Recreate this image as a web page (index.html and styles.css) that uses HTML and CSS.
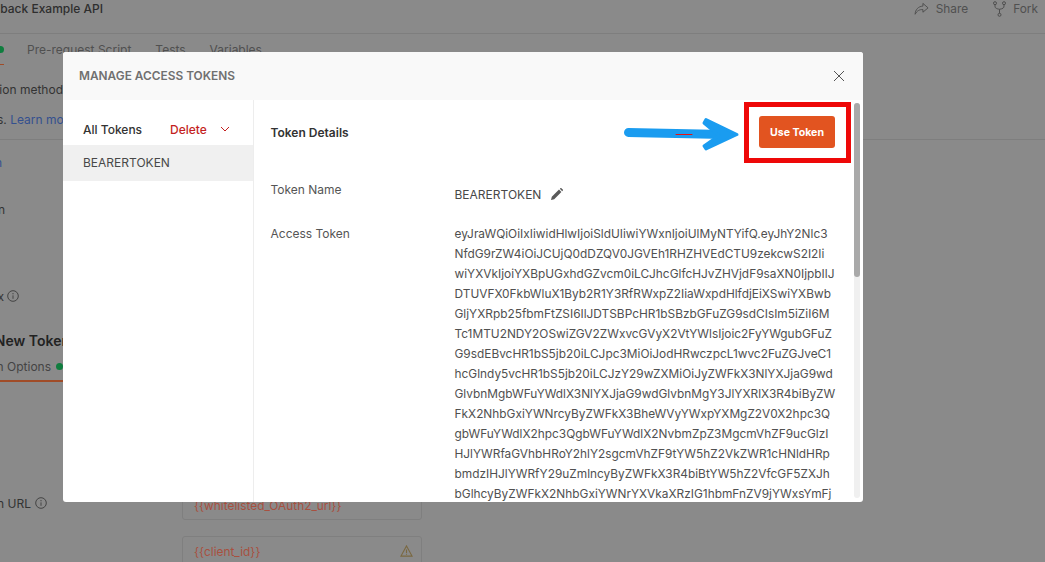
FILE: index.html
```html
<!DOCTYPE html>
<html lang="en">
<head>
<meta charset="utf-8">
<title>Manage Access Tokens</title>
<link rel="stylesheet" href="styles.css">
</head>
<body>
<div class="app">
  <header class="topbar">
    <div class="clip title-clip"><span class="title">Callback Example API</span></div>
    <div class="actions">
      <span class="action">
        <svg class="ico-share" viewBox="0 0 16 14"><path d="M9.500 1 15 5.800 9.500 10.400V7.600C6 7.400 3.200 8.800 1.200 12.600 1.400 7.600 4.600 4.200 9.500 3.900Z"/></svg>
        Share
      </span>
      <span class="action">
        <svg class="ico-fork" viewBox="0 0 13 16"><circle cx="2" cy="2.200" r="1.500"/><circle cx="11" cy="2.200" r="1.500"/><circle cx="6.500" cy="13.800" r="1.500"/><path d="M2 3.700V5c0 2 1 2.600 4.500 3.300 3.500-.7 4.500-1.300 4.500-3.300V3.700M6.500 8.300v4"/></svg>
        Fork
      </span>
    </div>
  </header>
  <nav class="tabs">
    <div class="clip tab-first"><span>Authorization</span><i class="dot"></i></div>
    <span class="tab">Pre-request Script</span>
    <span class="tab">Tests</span>
    <span class="tab">Variables</span>
  </nav>
  <div class="clip line-a"><span>Select an authorization method</span></div>
  <div class="clip line-b"><span>variables. <a class="learn">Learn more</a></span></div>
  <div class="rule"></div>
  <div class="clip line-c"><span class="blue">Authorization</span></div>
  <div class="clip line-d"><span>Token</span></div>
  <div class="clip line-e"><span>Header Prefix</span><svg class="info" viewBox="0 0 12 12"><circle cx="6" cy="6" r="5.300"/><path d="M6 5.400v3.400M6 3v1.300"/></svg></div>
  <div class="clip line-f"><span>Configure New Token</span></div>
  <div class="clip line-g"><span>Configuration Options</span><i class="dot"></i></div>
  <div class="clip-rule"></div>
  <div class="form-row">
    <div class="clip line-h"><span>Access Token URL</span><svg class="info" viewBox="0 0 12 12"><circle cx="6" cy="6" r="5.300"/><path d="M6 5.400v3.400M6 3v1.300"/></svg></div>
    <div class="inputs">
      <div class="input">{{whitelisted_OAuth2_url}}</div>
      <div class="input">{{client_id}}
        <svg class="warn" viewBox="0 0 14 13"><path d="M7 1 13 12H1Z"/><path d="M7 5v3.600M7 9.600v1"/></svg>
      </div>
    </div>
  </div>
</div>

<section class="modal">
  <div class="modal-head">
    <h2 class="modal-title">MANAGE ACCESS TOKENS</h2>
    <svg class="close" viewBox="0 0 12 12"><path d="M1 1l10 10M11 1 1 11"/></svg>
  </div>
  <div class="modal-body">
    <aside class="side">
      <div class="side-head">
        <span class="all">All Tokens</span>
        <span class="delete">Delete</span>
        <svg class="chev" viewBox="0 0 10 6"><path d="M1 1l4 4 4-4"/></svg>
      </div>
      <div class="side-item">BEARERTOKEN</div>
    </aside>
    <div class="detail">
      <div class="detail-head">
        <span class="detail-title">Token Details</span>
        <svg class="arrow" viewBox="0 0 116 36">
          <path class="arrow-shaft" d="M4.500 17.500 100 19.500"/>
          <path class="arrow-head" d="M82 4.500 113 19.500 82 34 80 31 95 20.500 80 8Z"/>
          <path class="arrow-mark" d="M52 19.500H68"/>
        </svg>
        <div class="redbox"><button class="use">Use Token</button></div>
      </div>
      <div class="row row-name">
        <span class="label">Token Name</span>
        <span class="value name">BEARERTOKEN
          <svg class="pencil" viewBox="0 0 12 12"><path d="M0 12l.8-3.200L8 1.600 10.400 4 3.200 11.200ZM8.800.8l.6-.6c.3-.3.7-.3 1 0l1.400 1.400c.3.3.3.7 0 1l-.6.6Z"/></svg>
        </span>
      </div>
      <div class="row">
        <span class="label">Access Token</span>
        <div class="token">
          <div>eyJraWQiOiIxIiwidHlwIjoiSldUIiwiYWxnIjoiUlMyNTYifQ.eyJhY2Nlc3</div>
          <div>NfdG9rZW4iOiJCUjQ0dDZQV0JGVEh1RHZHVEdCTU9zekcwS2I2Ii</div>
          <div>wiYXVkIjoiYXBpUGxhdGZvcm0iLCJhcGlfcHJvZHVjdF9saXN0IjpbIlJ</div>
          <div>DTUVFX0FkbWluX1Byb2R1Y3RfRWxpZ2IiaWxpdHlfdjEiXSwiYXBwb</div>
          <div>GljYXRpb25fbmFtZSI6IlJDTSBPcHR1bSBzbGFuZG9sdCIsIm5iZiI6M</div>
          <div>Tc1MTU2NDY2OSwiZGV2ZWxvcGVyX2VtYWlsIjoic2FyYWgubGFuZ</div>
          <div>G9sdEBvcHR1bS5jb20iLCJpc3MiOiJodHRwczpcL1wvc2FuZGJveC1</div>
          <div>hcGlndy5vcHR1bS5jb20iLCJzY29wZXMiOiJyZWFkX3NlYXJjaG9wd</div>
          <div>GlvbnMgbWFuYWdlX3NlYXJjaG9wdGlvbnMgY3JlYXRlX3R4biByZW</div>
          <div>FkX2NhbGxiYWNrcyByZWFkX3BheWVyYWxpYXMgZ2V0X2hpc3Q</div>
          <div>gbWFuYWdlX2hpc3QgbWFuYWdlX2NvbmZpZ3MgcmVhZF9ucGlzI</div>
          <div>HJlYWRfaGVhbHRoY2hlY2sgcmVhZF9tYW5hZ2VkZWR1cHNldHRp</div>
          <div>bmdzIHJlYWRfY29uZmlncyByZWFkX3R4biBtYW5hZ2VfcGF5ZXJh</div>
          <div>bGlhcyByZWFkX2NhbGxiYWNrYXVkaXRzIG1hbmFnZV9jYWxsYmFj</div>
        </div>
      </div>
      <div class="scroll"><div class="thumb"></div></div>
    </div>
  </div>
</section>
</body>
</html>
```
FILE: styles.css
```css
* { box-sizing: border-box; }
html, body { margin: 0; height: 562px; overflow: hidden; }
body {
  position: relative;
  background: #8a8a8a;
  font-family: Inter, "Liberation Sans", sans-serif;
  font-size: 12px;
  color: #3a3a3a;
}
.app { height: 562px; overflow: hidden; }
.clip { display: flex; justify-content: flex-end; align-items: center; white-space: nowrap; }

.topbar { height: 34px; display: flex; justify-content: space-between; border-bottom: 1px solid #7e7e7e; }
.title-clip { width: 103px; height: 17px; }
.title { font-weight: 500; color: #2e2e2e; }
.actions { display: flex; gap: 25px; padding: 0 7px 0 0; height: 17px; }
.action { display: flex; align-items: center; gap: 7px; color: #505050; font-size: 11.88px; }
.ico-share { width: 15px; height: 14px; fill: none; stroke: #4e4e4e; stroke-width: 1; }
.ico-fork { width: 13px; height: 16px; fill: none; stroke: #4e4e4e; stroke-width: 1; }

.tabs { height: 30px; display: flex; align-items: center; color: #505050; }
.tab-first { width: 4px; gap: 5px; align-self: stretch; box-shadow: 0 1px 0 #a04c28; }
.tab-first span { color: #2e2e2e; }
.tab { margin-left: 24px; }
.tab:nth-child(2) { margin-left: 23px; }
.dot { display: inline-block; width: 7px; height: 7px; border-radius: 50%; background: #0f7d3e; flex: none; }

.line-a { width: 63px; height: 20px; margin-top: 15px; color: #333; }
.line-b { width: 75px; height: 20px; margin-top: 10px; color: #333; }
.learn { color: #34508f; }
.rule { height: 1px; background: #7e7e7e; margin-top: 10px; }
.line-c { width: 2px; height: 20px; margin-top: 12px; }
.blue { color: #34508f; }
.line-d { width: 5px; height: 20px; margin-top: 27px; color: #333; }
.line-e { width: 19px; height: 20px; margin-top: 67px; gap: 3px; color: #333; }
.info { width: 12px; height: 12px; flex: none; fill: none; stroke: #444; stroke-width: 1; }
.line-f { width: 70px; height: 20px; margin-top: 24px; font-size: 14px; font-weight: 600; color: #222; }
.line-g { width: 63px; height: 20px; margin-top: 6px; gap: 5px; color: #444; }
.clip-rule { width: 63px; height: 2px; background: #a04c28; margin-top: 4px; }
.form-row { display: flex; margin-top: 110px; align-items: flex-start; }
.line-h { width: 47px; height: 20px; margin-top: 1px; gap: 4px; color: #333; flex: none; }
.inputs { margin-left: 135px; margin-top: -2px; display: flex; flex-direction: column; gap: 16px; }
.input {
  width: 240px; height: 30px; padding: 0 8px 0 11px;
  display: flex; align-items: center; justify-content: space-between;
  border: 1px solid #7f7f7f; border-radius: 3px;
  color: #a8503f; font-size: 11.88px;
}
.warn { width: 13px; height: 12px; fill: none; stroke: #7a6840; stroke-width: 1.2; }

.modal {
  position: absolute; left: 63px; top: 52px; width: 800px; height: 450px;
  background: #fff; border-radius: 3px; overflow: hidden;
  display: flex; flex-direction: column;
}
.modal-head { height: 48px; flex: none; background: #f9f9f9; display: flex; align-items: center; justify-content: space-between; padding: 0 18px 0 16px; }
.modal-title { margin: 0 0 1px; font-size: 11.88px; font-weight: 600; color: #707070; }
.close { width: 12px; height: 12px; fill: none; stroke: #555; stroke-width: 1; }
.modal-body { flex: 1; display: flex; min-height: 0; }

.side { width: 191px; flex: none; border-right: 1px solid #ededed; }
.side-head { height: 45px; padding: 13px 0 0 20px; display: flex; align-items: center; }
.all { font-weight: 500; color: #333; width: 87px; }
.delete { font-weight: 500; color: #c41f1f; width: 50px; }
.chev { width: 10px; height: 6px; fill: none; stroke: #c41f1f; stroke-width: 1; }
.side-item { height: 36px; padding: 0 0 2px 20px; display: flex; align-items: center; background: #f0f0f0; color: #484848; }

.detail { flex: 1; position: relative; padding: 2px 12px 0 16.5px; min-width: 0; overflow: hidden; }
.detail-head { display: flex; align-items: center; height: 61px; }
.detail-title { font-weight: 600; color: #333; margin-right: auto; }
.arrow { width: 116px; height: 36px; margin-right: 4px; }
.arrow path { stroke-linecap: round; stroke-linejoin: round; }
.arrow-shaft { fill: none; stroke: #1a9cf0; stroke-width: 9; }
.arrow-head { fill: #1a9cf0; stroke: #1a9cf0; stroke-width: 3; }
.arrow-mark { fill: none; stroke: #e81010; stroke-width: 1; }
.redbox { width: 107px; height: 61px; padding: 9px 0 0 10px; border: 5px solid #ee0808; }
.use {
  display: block; width: 76px; height: 32px; border: 0; border-radius: 3px; padding: 0;
  background: #e25420; color: #fff; font: 700 10.6px Inter, "Liberation Sans", sans-serif;
}
.row { display: flex; }
.row-name { margin-top: 17px; height: 44px; }
.label { width: 184px; flex: none; color: #555; line-height: 20px; }
.value { color: #484848; }
.name { display: flex; align-items: center; gap: 10px; height: 24px; margin-top: 2px; }
.pencil { width: 12px; height: 12px; fill: #5a5a5a; }
.token { color: #505050; font-size: 11.88px; line-height: 20px; white-space: nowrap; }

.scroll { position: absolute; right: 3px; top: 3px; bottom: 4px; width: 6px; background: #f0f0f0; border-radius: 3px; }
.thumb { height: 174px; background: #a9a9a9; border-radius: 3px; }
```
